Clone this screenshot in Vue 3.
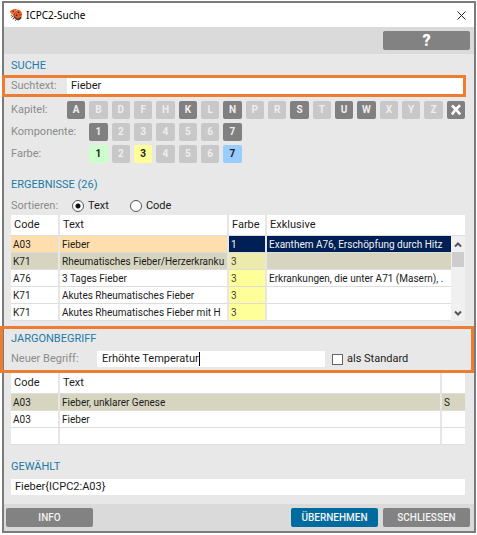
<template>
  <div class="page">
    <main class="window">
      <header class="titlebar">
        <svg class="logo" viewBox="0 0 14 14" aria-hidden="true">
          <path d="M4 6L8 3 10 9 8 12 5 10Z" fill="#6b3a28" />
          <path d="M.8 3.800C2.500 1.200 5.500 .4 8.200 1.400L4.800 6.600C3.200 6.400 1.600 5.400 .8 3.800Z" fill="#ee6a30" />
          <path d="M8.600 1.600C11.600 2.200 13.400 4.600 13 7.600L9 10.600C6.600 9.800 5.400 8.600 5.200 6.800Z" fill="#ea5c26" />
          <path d="M9 10.400L12.600 8 12.200 10.800 9.400 12.600 7.400 11.800Z" fill="#4a302a" />
          <path d="M3.400 6.800L1.800 7.600M4 8L2.400 9.400M5 9.600L4 11.400M7 11.400L6.600 12.800" stroke="#4a2a20" stroke-width=".9" fill="none" />
          <circle cx="4.200" cy="3.200" r=".8" fill="#3a2420" />
          <circle cx="9.400" cy="4.400" r=".8" fill="#3a2420" />
          <circle cx="7.600" cy="7.400" r=".8" fill="#3a2420" />
          <circle cx="11" cy="6.800" r=".6" fill="#3a2420" />
        </svg>
        <h1 class="title">ICPC2-Suche</h1>
        <button class="close" type="button" aria-label="Fenster schließen">
          <svg viewBox="0 0 9 9"><path d="M.5 .5L8.500 8.500M8.500 .5L.5 8.500" stroke="#222" fill="none" /></svg>
        </button>
      </header>

      <div class="toolbar">
        <button class="btn btn--help" type="button">?</button>
      </div>

      <div class="content">
        <section class="search">
          <h2>SUCHE</h2>
          <div class="field field--search marked">
            <label for="search">Suchtext:</label>
            <input id="search" v-model="searchText" type="text" />
          </div>
          <div class="filters">
            <div v-for="row in filters" :key="row.label" class="filter">
              <span class="filter-label">{{ row.label }}</span>
              <div class="keys">
                <button
                  v-for="key in row.keys"
                  :key="key.text"
                  type="button"
                  class="key"
                  :class="key.state && 'key--' + key.state"
                >{{ key.text }}</button>
                <button v-if="row.clear" type="button" class="key key--on" aria-label="Filter löschen">
                  <svg viewBox="0 0 12 12"><path d="M2 1.500Q6 5 10.200 10.500M10 1.200Q5 5.500 2 10.500" stroke="#fff" stroke-width="2.600" fill="none" /></svg>
                </button>
              </div>
            </div>
          </div>
        </section>

        <section class="results">
          <h2>ERGEBNISSE (26)</h2>
          <div class="sort">
            <span class="sort-label">Sortieren:</span>
            <label><input v-model="sortBy" type="radio" name="sort" value="text" />Text</label>
            <label><input v-model="sortBy" type="radio" name="sort" value="code" />Code</label>
          </div>
          <table>
            <colgroup>
              <col class="col-code" />
              <col class="col-text" />
              <col class="col-color" />
              <col />
              <col class="col-scroll" />
            </colgroup>
            <thead>
              <tr>
                <th>Code</th>
                <th>Text</th>
                <th>Farbe</th>
                <th colspan="2">Exklusive</th>
              </tr>
            </thead>
            <tbody>
              <tr v-for="(r, i) in results" :key="i" :class="r.state">
                <td>{{ r.code }}</td>
                <td>{{ r.text }}</td>
                <td class="color">{{ r.color }}</td>
                <td class="exclusive">{{ r.exclusive }}</td>
                <td v-if="i === 0" class="scroll" :rowspan="results.length">
                  <div class="scrollbar">
                    <svg viewBox="0 0 8 6"><path d="M1 4.500L4 1.500 7 4.500" /></svg>
                    <div class="thumb"></div>
                    <svg viewBox="0 0 8 6"><path d="M1 1.500L4 4.500 7 1.500" /></svg>
                  </div>
                </td>
              </tr>
            </tbody>
          </table>
        </section>

        <section class="jargon">
          <div class="jargon-form marked">
            <h2>JARGONBEGRIFF</h2>
            <div class="field field--term">
              <label for="term">Neuer Begriff:</label>
              <input id="term" v-model="term" class="term" type="text" />
              <label class="check"><input v-model="isDefault" type="checkbox" />als Standard</label>
            </div>
          </div>
          <table>
            <colgroup>
              <col class="col-code" />
              <col />
              <col class="col-flag" />
            </colgroup>
            <thead>
              <tr>
                <th>Code</th>
                <th>Text</th>
                <th></th>
              </tr>
            </thead>
            <tbody>
              <tr v-for="(t, i) in terms" :key="i" :class="t.state">
                <td>{{ t.code }}</td>
                <td>{{ t.text }}</td>
                <td>{{ t.flag }}</td>
              </tr>
            </tbody>
          </table>
        </section>

        <section class="chosen">
          <h2><label for="chosen">GEWÄHLT</label></h2>
          <input id="chosen" v-model="chosen" type="text" />
        </section>
      </div>

      <footer class="footer">
        <button class="btn btn--info" type="button">INFO</button>
        <button class="btn btn--primary" type="button">ÜBERNEHMEN</button>
        <button class="btn" type="button">SCHLIESSEN</button>
      </footer>
    </main>
  </div>
</template>

<script setup>
import { ref } from 'vue';

const searchText = ref('Fieber');
const sortBy = ref('text');
const term = ref('Erhöhte Temperatur');
const isDefault = ref(false);
const chosen = ref('Fieber{ICPC2:A03}');

function makeKeys(chars, states) {
  return chars.split('').map((text) => ({ text, state: states[text] }));
}

const filters = [
  {
    label: 'Kapitel:',
    keys: makeKeys('ABDFHKLNPRSTUWXYZ', { A: 'on', K: 'on', N: 'on', S: 'on', U: 'on', W: 'on' }),
    clear: true,
  },
  { label: 'Komponente:', keys: makeKeys('1234567', { 1: 'on', 7: 'on' }) },
  { label: 'Farbe:', keys: makeKeys('1234567', { 1: 'green', 3: 'yellow', 7: 'blue' }) },
];

const results = [
  { code: 'A03', text: 'Fieber', color: 1, exclusive: 'Exanthem A76, Erschöpfung durch Hitz', state: 'selected' },
  { code: 'K71', text: 'Rheumatisches Fieber/Herzerkranku', color: 3, exclusive: '', state: 'shaded' },
  { code: 'A76', text: '3 Tages Fieber', color: 3, exclusive: 'Erkrankungen, die unter A71 (Masern), .' },
  { code: 'K71', text: 'Akutes Rheumatisches Fieber', color: 3, exclusive: '' },
  { code: 'K71', text: 'Akutes Rheumatisches Fieber mit H', color: 3, exclusive: '' },
];

const terms = [
  { code: 'A03', text: 'Fieber, unklarer Genese', flag: 'S', state: 'shaded' },
  { code: 'A03', text: 'Fieber', flag: '' },
  { code: '', text: '', flag: '' },
];
</script>

<style>
body {
  margin: 0;
  background: #fff;
}
</style>

<style scoped>
* {
  box-sizing: border-box;
}

.page {
  padding: 1px 1px 2px 2px;
  font: 11px/16px Roboto, "Liberation Sans", sans-serif;
  color: #1c1c1c;
}

.window {
  border: 2px solid #7b7b7b;
  background: #e8e8e8;
}

input,
button {
  margin: 0;
  font: inherit;
  color: inherit;
}

.titlebar {
  display: flex;
  align-items: center;
  height: 24px;
  padding: 0 8px 0 5px;
  background: #fff;
}

.logo {
  width: 14px;
  height: 14px;
}

.title {
  flex: 1;
  margin: 0 0 0 3px;
  font: 10px/16px "Noto Sans", "Open Sans", sans-serif;
  color: #000;
}

.close {
  display: flex;
  padding: 0;
  border: 0;
  background: none;
}

.close svg {
  width: 9px;
  height: 9px;
}

.toolbar {
  display: flex;
  justify-content: flex-end;
  padding: 4px;
  background: #dadada;
}

.btn {
  width: 87px;
  height: 19px;
  padding: 0;
  border: 0;
  border-radius: 2px;
  background: #828282;
  color: #f2f2f2;
  font-size: 10px;
  font-weight: 500;
}

.btn--help {
  font-size: 16px;
  font-weight: 900;
  color: #fff;
}

.btn--info {
  margin-right: auto;
}

.btn--primary {
  background: #006b9f;
}

.content {
  padding: 4px 9px 9px 7px;
}

h2 {
  margin: 0 0 4px;
  font-size: 11px;
  font-weight: 400;
  line-height: 16px;
  color: #1d7aa8;
}

.search {
  padding-bottom: 14px;
}

.results {
  padding-bottom: 10px;
}

.jargon {
  padding-bottom: 14px;
}

.marked {
  position: relative;
}

/* orange frame laid over the highlighted areas */
.marked::after {
  content: "";
  position: absolute;
  border: 3px solid #ed7d31;
  pointer-events: none;
}

.field--search::after {
  inset: -3px -1px -3px -9px;
}

.jargon-form {
  padding-bottom: 6px;
}

.jargon-form::after {
  inset: -5px -9px 0 -11px;
}

.field {
  display: grid;
  align-items: center;
}

.field--search {
  grid-template-columns: 56px 1fr;
}

.field--term {
  grid-template-columns: 86px 228px 1fr;
}

.field > label,
.filter-label,
.sort-label {
  color: #8c8c8c;
}

input[type="text"] {
  display: block;
  width: 100%;
  height: 16px;
  padding: 0 4px;
  border: 0;
  outline: none;
  background: #fff;
}

.field input.term {
  padding-left: 5px;
  background: #fff linear-gradient(#000, #000) no-repeat 102px 1px / 1px 14px;
}

.filters {
  display: grid;
  gap: 4px;
  margin-top: 7px;
}

.filter {
  display: grid;
  grid-template-columns: 56px 1fr;
  align-items: center;
}

.filter-label {
  white-space: nowrap;
}

.keys {
  display: grid;
  grid-template-columns: repeat(18, 1fr);
  gap: 4px;
}

/* the numeric rows start below the second letter */
.filter + .filter .key:first-child {
  grid-column-start: 2;
}

.key {
  display: flex;
  align-items: center;
  justify-content: center;
  height: 18px;
  padding: 0;
  border: 0;
  border-radius: 2px;
  background: #c8c8c8;
  color: #eee;
  font-size: 10px;
  font-weight: 700;
}

.key svg {
  width: 12px;
  height: 12px;
}

.key--on {
  background: #808080;
}

.key--green {
  background: #ccffcc;
  color: #222;
}

.key--yellow {
  background: #ffff99;
  color: #222;
}

.key--blue {
  background: #99ccff;
  color: #222;
}

.sort {
  display: flex;
  line-height: 18px;
}

.sort-label {
  width: 61px;
}

.sort label {
  display: flex;
  align-items: center;
  gap: 4px;
  height: 18px;
  margin-right: 21px;
}

.sort input {
  appearance: none;
  width: 12px;
  height: 12px;
  border: 1px solid #555;
  border-radius: 50%;
  background: #fff;
}

.sort input:checked {
  background: #fff radial-gradient(circle, #111 2px, #fff 3px);
}

.field .check {
  display: flex;
  align-items: center;
  gap: 4px;
  margin-left: 7px;
  color: #1c1c1c;
}

.check input {
  appearance: none;
  width: 11px;
  height: 11px;
  border: 1px solid #666;
  background: #fff;
}

table {
  width: 100%;
  table-layout: fixed;
  border-spacing: 0;
}

.col-code {
  width: 49px;
}

.col-text {
  width: 169px;
}

.col-color {
  width: 38px;
}

.col-scroll {
  width: 14px;
}

.col-flag {
  width: 23px;
}

th,
td {
  height: 17px;
  padding: 2px 0 0 2px;
  border-right: 2px solid #e6e6e6;
  border-bottom: 1px solid #ddd;
  background: #fff;
  background-clip: padding-box;
  line-height: 14px;
  text-align: left;
  white-space: nowrap;
  overflow: hidden;
}

td {
  font-size: 10px;
}

th {
  height: 21px;
  padding: 0 0 0 3px;
  font-weight: 400;
}

th:last-child,
td:last-child,
td.exclusive {
  border-right: 0;
}

.color {
  background-color: #ffff99;
  color: #444;
}

.shaded td {
  background-color: #d7d5bf;
}

.shaded .color {
  background-color: #ecebab;
}

.selected td {
  background-color: #ffdead;
}

.selected .color,
.selected .exclusive {
  background-color: #001f55;
  color: #f2f2f2;
}

.selected .scroll {
  padding: 0;
  border: 0;
  background: #f0f0f0;
}

.scrollbar {
  display: flex;
  flex-direction: column;
  align-items: center;
  height: 84px;
  padding: 5px 0;
}

.scrollbar svg {
  width: 8px;
  height: 6px;
  fill: none;
  stroke: #555;
  stroke-width: 2;
}

.scrollbar svg:last-child {
  margin-top: auto;
}

.thumb {
  width: 12px;
  height: 15px;
  margin-top: 4px;
  background: #cdcdcd;
}

.footer {
  display: flex;
  gap: 5px;
  padding: 4px 4px 4px 2px;
  background: #dadada;
}
</style>
